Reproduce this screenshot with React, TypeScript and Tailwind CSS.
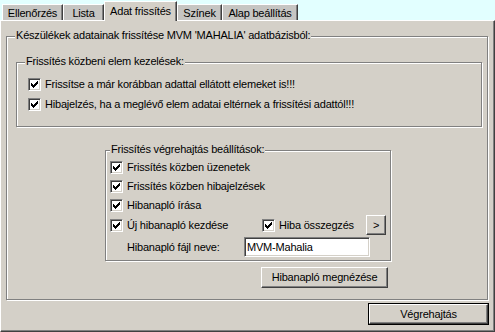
import React from "react";

// Win2k-style dialog page: "Adat frissítés" tab of the MVM data refresh tool.

const raised =
  "border border-t-white border-l-white border-r-[#404040] border-b-[#404040] shadow-[inset_-1px_-1px_0_#808080]";
const etched = "border border-[#808080] shadow-[1px_1px_0_#fff,inset_1px_1px_0_#fff]";

function CheckBox() {
  return (
    <span className="flex h-[13px] w-[13px] shrink-0 items-center justify-center border border-t-[#808080] border-l-[#808080] border-b-white border-r-white bg-white shadow-[inset_1px_1px_0_#404040,inset_-1px_-1px_0_#d4d0c8]">
      <svg width="7" height="7" viewBox="0 0 7 7" shapeRendering="crispEdges" aria-hidden>
        <path
          fill="#000"
          d="M6 0h1v1h-1z M5 1h2v1h-2z M0 2h1v1h-1z M4 2h3v1h-3z M0 3h2v1h-2z M3 3h3v1h-3z M0 4h5v1h-5z M1 5h3v1h-3z M2 6h1v1h-1z"
        />
      </svg>
    </span>
  );
}

function Check({ label, className = "" }: { label: string; className?: string }) {
  return (
    <label className={`flex items-center gap-[4px] ${className}`}>
      <CheckBox />
      <span className="whitespace-nowrap">{label}</span>
    </label>
  );
}

function Group({
  title,
  titleLeft = "left-[8px]",
  className,
  children,
}: {
  title: string;
  titleLeft?: string;
  className: string;
  children?: React.ReactNode;
}) {
  return (
    <div className={`relative ${etched} ${className}`}>
      <span
        className={`absolute top-[-9px] ${titleLeft} whitespace-nowrap bg-[#d4d0c8] px-[1px] leading-[14px]`}
      >
        {title}
      </span>
      {children}
    </div>
  );
}

const TABS = [
  { label: "Ellenőrzés", w: "w-[61px]" },
  { label: "Lista", w: "w-[41px]" },
  { label: "Adat frissítés", w: "w-[73px]", active: true },
  { label: "Színek", w: "w-[45px]" },
  { label: "Alap beállítás", w: "w-[76px]" },
];

export default function App() {
  return (
    <div className="flex h-[332px] w-[495px] flex-col bg-[#e2ffff] font-['Liberation_Sans',Arial,sans-serif] text-[11px] leading-[13px] tracking-[-0.2px] text-black">
      {/* Tabs */}
      <div className="relative z-10 flex h-[20px] shrink-0 items-end pl-[2px]">
        {TABS.map((t) =>
          t.active ? (
            <div
              key={t.label}
              className={`${t.w} -mb-px flex h-[20px] items-start justify-center border-l border-t border-r border-l-white border-t-white border-r-[#404040] bg-[#d4d0c8] pt-[3px] shadow-[inset_-1px_0_0_#808080]`}
            >
              {t.label}
            </div>
          ) : (
            <div
              key={t.label}
              className={`${t.w} flex h-[16px] items-start justify-center border-l border-t border-r border-l-white border-t-white border-r-[#404040] bg-[#c6c5c2] pt-[2px] shadow-[inset_-1px_0_0_#808080]`}
            >
              {t.label}
            </div>
          ),
        )}
      </div>

      {/* Panel */}
      <div className="flex-1 border border-t-white border-l-white border-r-[#404040] border-b-[#404040] bg-[#d4d0c8] shadow-[inset_-1px_-1px_0_#808080]">
        <Group
          title="Készülékek adatainak frissítése MVM 'MAHALIA' adatbázisból:"
          className="ml-[5px] mt-[15px] h-[264px] w-[482px]"
        >
          <Group
            title="Frissítés közbeni elem kezelések:"
            className="ml-[9px] mt-[25px] h-[65px] w-[466px]"
          >
            <div className="flex flex-col pl-[11px] pt-[11px]">
              <Check label="Frissítse a már korábban adattal ellátott elemeket is!!!" className="h-[20px]" />
              <Check label="Hibajelzés, ha a meglévő elem adatai eltérnek a frissítési adattól!!!" className="h-[20px]" />
            </div>
          </Group>

          <Group
            title="Frissítés végrehajtás beállítások:"
            titleLeft="left-[4px]"
            className="ml-[98px] mt-[23px] h-[111px] w-[286px]"
          >
            <div className="flex flex-col pl-[4px] pr-[3px] pt-[6px]">
              <Check label="Frissítés közben üzenetek" className="h-[20px]" />
              <Check label="Frissítés közben hibajelzések" className="h-[19px]" />
              <Check label="Hibanapló írása" className="h-[19px]" />
              <div className="flex h-[20px] items-center">
                <Check label="Új hibanapló kezdése" className="w-[152px]" />
                <Check label="Hiba összegzés" />
                <button
                  type="button"
                  className={`ml-auto mr-[1px] flex h-[20px] w-[20px] items-center justify-center bg-[#d4d0c8] ${raised}`}
                >
                  &gt;
                </button>
              </div>
              <div className="mt-[2px] flex h-[20px] items-center">
                <span className="w-[134px] whitespace-nowrap pl-[17px]">Hibanapló fájl neve:</span>
                <div className="flex h-[20px] w-[126px] items-center border border-t-[#808080] border-l-[#808080] border-b-white border-r-white bg-white pl-[2px] shadow-[inset_1px_1px_0_#404040,inset_-1px_-1px_0_#d4d0c8]">
                  MVM-Mahalia
                </div>
              </div>
            </div>
          </Group>

          <button
            type="button"
            className={`ml-[254px] mt-[6px] flex h-[21px] w-[127px] items-center justify-center bg-[#d4d0c8] ${raised}`}
          >
            Hibanapló megnézése
          </button>
        </Group>

        <div className="ml-[367px] mt-[3px] h-[22px] w-[121px] border border-black">
          <button
            type="button"
            className={`flex h-full w-full items-center justify-center bg-[#d4d0c8] ${raised}`}
          >
            Végrehajtás
          </button>
        </div>
      </div>
    </div>
  );
}
